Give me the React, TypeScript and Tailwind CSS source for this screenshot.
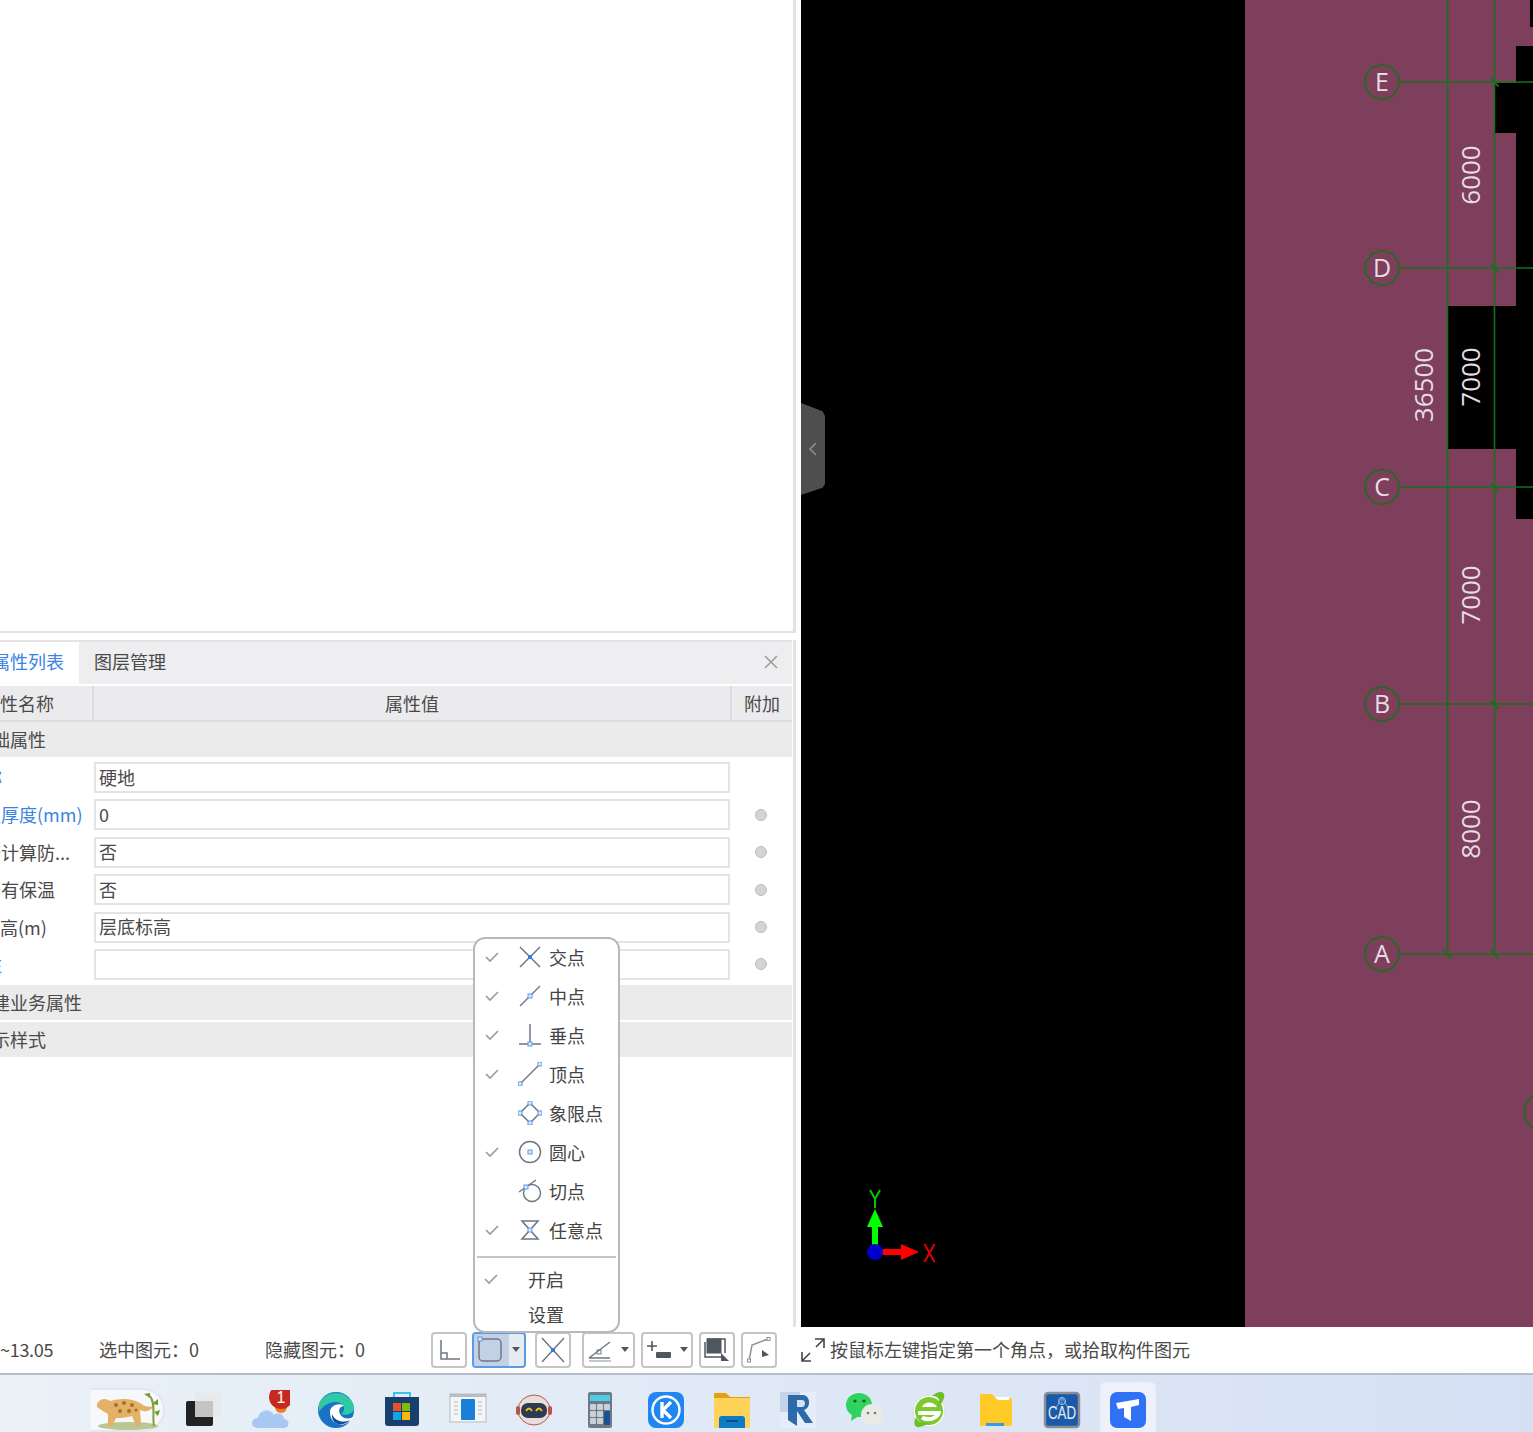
import type { ReactNode } from "react";

const rows = [
  { name: "名称", value: "硬地", blue: true, offset: "-ml-[34px]", dot: false },
  { name: "板厚度(mm)", value: "0", blue: true, offset: "-ml-[17px]", dot: true },
  { name: "是否计算防...", value: "否", blue: false, offset: "-ml-[35px]", dot: true },
  { name: "是否有保温", value: "否", blue: false, offset: "-ml-[35px]", dot: true },
  { name: "底标高(m)", value: "层底标高", blue: false, offset: "-ml-[36px]", dot: true },
  { name: "备注", value: "", blue: true, offset: "-ml-[34px]", dot: true },
];

const S = "#6f7785";
const B = "#5b9be6";

function Handle({ x, y }: { x: number; y: number }) {
  return <rect x={x - 2} y={y - 2} width="4" height="4" fill="#dbe9fb" stroke={B} strokeWidth="1" />;
}

const snapIcons: Record<string, ReactNode> = {
  交点: (
    <>
      <path d="M2 2 22 22M22 2 2 22" stroke={S} strokeWidth="1.5" />
      <rect x="10" y="10" width="4" height="4" fill="#2f7fe0" />
    </>
  ),
  中点: (
    <>
      <path d="M2 22 22 2" stroke={S} strokeWidth="1.5" />
      <Handle x={12} y={12} />
    </>
  ),
  垂点: (
    <>
      <path d="M12 1V20M1 21H23" stroke={S} strokeWidth="1.5" />
      <Handle x={12} y={21} />
    </>
  ),
  顶点: (
    <>
      <path d="M2 22 22 2" stroke={S} strokeWidth="1.5" />
      <Handle x={22} y={2} />
      <Handle x={2} y={22} />
    </>
  ),
  象限点: (
    <>
      <path d="M12 2 22 12 12 22 2 12Z" fill="none" stroke={S} strokeWidth="1.5" />
      <Handle x={12} y={2} />
      <Handle x={22} y={12} />
      <Handle x={12} y={22} />
      <Handle x={2} y={12} />
    </>
  ),
  圆心: (
    <>
      <circle cx="12" cy="12" r="10.5" fill="none" stroke={S} strokeWidth="1.5" />
      <Handle x={12} y={12} />
    </>
  ),
  切点: (
    <>
      <circle cx="14" cy="14" r="8.5" fill="none" stroke={S} strokeWidth="1.5" />
      <path d="M1 13 18 1" stroke={S} strokeWidth="1.5" />
      <Handle x={8} y={8} />
    </>
  ),
  任意点: (
    <>
      <path d="M4 3H20L4 21H20Z" fill="none" stroke={S} strokeWidth="1.6" />
      <Handle x={12} y={12} />
    </>
  ),
};

const menuItems = [
  { label: "交点", on: true },
  { label: "中点", on: true },
  { label: "垂点", on: true },
  { label: "顶点", on: true },
  { label: "象限点", on: false },
  { label: "圆心", on: true },
  { label: "切点", on: false },
  { label: "任意点", on: true },
];

function Check({ on }: { on: boolean }) {
  return (
    <svg width="16" height="12" viewBox="0 0 16 12" className={on ? "" : "invisible"}>
      <path d="M2 6 6 10 14 2" fill="none" stroke="#9a9a9a" strokeWidth="1.6" />
    </svg>
  );
}

function SnapMenu() {
  return (
    <div className="absolute left-[473px] top-[937px] z-20 flex h-[396px] w-[147px] flex-col rounded-[12px] border-2 border-[#b9b9b9] bg-white">
      <div className="-mt-[2px]">
        {menuItems.map((m) => (
          <div key={m.label} className="flex h-[39.1px] shrink-0 items-center pl-[9px]">
            <Check on={m.on} />
            <svg width="24" height="24" viewBox="0 0 24 24" className="ml-[18px]">
              {snapIcons[m.label]}
            </svg>
            <span className="ml-[7px] text-[18px] leading-none text-[#444]">{m.label}</span>
          </div>
        ))}
      </div>
      <div className="mx-[2px] mt-[6px] h-[2px] bg-[#c4c4c4]" />
      <div className="mt-[4px] flex h-[36px] items-center pl-[8px]">
        <Check on />
        <span className="ml-[29px] text-[18px] leading-none text-[#444]">开启</span>
      </div>
      <div className="mt-[1px] flex h-[34px] items-center pl-[53px]">
        <span className="text-[18px] leading-none text-[#444]">设置</span>
      </div>
    </div>
  );
}

function PropertyPanel() {
  return (
    <div className="flex h-[687px] flex-col border-r-[3px] border-[#e2e2e2] bg-white pr-[1px]">
      <div className="flex h-[44px] items-stretch border-t-2 border-[#e4e4e6] bg-[#eeeef0] text-[18px]">
        <div className="flex w-[79px] items-center overflow-hidden bg-white pb-[3px]">
          <span className="-ml-[8px] whitespace-nowrap text-[#3b82e6]">属性列表</span>
        </div>
        <div className="ml-[15px] flex items-center pb-[3px] text-[#4a4a4a]">图层管理</div>
        <svg width="14" height="14" viewBox="0 0 14 14" className="ml-auto mr-[14px] -mt-[2px] self-center">
          <path d="M1 1 13 13M13 1 1 13" stroke="#9b9b9b" strokeWidth="1.5" />
        </svg>
      </div>
      <div className="mt-[2px] flex h-[36px] items-center border-b-2 border-[#dcdcdc] bg-[#ebebed] text-[18px] text-[#4a4a4a]">
        <div className="flex h-full w-[94px] items-center overflow-hidden border-r-2 border-[#dcdcdc]">
          <span className="-ml-[18px] whitespace-nowrap">属性名称</span>
        </div>
        <div className="flex h-full w-[638px] items-center justify-center border-r-2 border-[#dcdcdc]">属性值</div>
        <div className="flex-1 text-center">附加</div>
      </div>
      <GroupRow label="基础属性" className="h-[35px]" />
      <div className="pt-[5px]">
        {rows.map((r) => (
          <div key={r.value + r.name} className="flex h-[37.4px] items-start">
            <div className="flex h-[31px] w-[94px] shrink-0 items-center overflow-hidden">
              <span className={`whitespace-nowrap text-[18px] ${r.offset} ${r.blue ? "text-[#3b82e6]" : "text-[#4a4a4a]"}`}>
                {r.name}
              </span>
            </div>
            <div className="flex h-[31px] w-[636px] items-center border-2 border-[#e4e4e4] pb-[1px] pl-[3px] text-[18px] text-[#4a4a4a]">
              {r.value}
            </div>
            <div className="flex h-[31px] flex-1 items-center justify-center pr-[1px]">
              {r.dot && <span className="h-[12px] w-[12px] rounded-full border border-[#bdbdbd] bg-[#d4d4d4]" />}
            </div>
          </div>
        ))}
      </div>
      <GroupRow label="土建业务属性" className="-mt-[1px] h-[35px]" />
      <GroupRow label="显示样式" className="mt-[2px] h-[35px]" />
    </div>
  );
}

function GroupRow({ label, className }: { label: string; className: string }) {
  return (
    <div className={`flex items-center overflow-hidden bg-[#ebebeb] text-[18px] text-[#4a4a4a] ${className}`}>
      <span className="-ml-[26px] whitespace-nowrap">{label}</span>
    </div>
  );
}

const axes = [
  { l: "E", y: 82 },
  { l: "D", y: 268 },
  { l: "C", y: 487 },
  { l: "B", y: 704 },
  { l: "A", y: 954 },
];

function octagon(cx: number, cy: number, r: number) {
  const pts = [];
  for (let i = 0; i < 10; i++) {
    const a = (Math.PI * 2 * i) / 10 + Math.PI / 10;
    pts.push(`${(cx + r * Math.cos(a)).toFixed(1)},${(cy + r * Math.sin(a)).toFixed(1)}`);
  }
  return pts.join(" ");
}

function Drawing() {
  const green = "#16701c";
  const label = "#e6dce3";
  const dims = [
    { t: "6000", x: 1471, y: 175 },
    { t: "7000", x: 1471, y: 377 },
    { t: "36500", x: 1424, y: 385 },
    { t: "7000", x: 1471, y: 595 },
    { t: "8000", x: 1471, y: 829 },
  ];
  return (
    <svg width="732" height="1327" viewBox="801 0 732 1327" className="block">
      <rect x="801" y="0" width="732" height="1327" fill="#000" />
      <rect x="1245" y="0" width="288" height="1327" fill="#7d3f5b" />
      <rect x="1530" y="0" width="3" height="27" fill="#000" />
      <rect x="1516" y="46" width="17" height="473" fill="#000" />
      <rect x="1495" y="83" width="21" height="50" fill="#000" />
      <rect x="1448" y="306" width="85" height="143" fill="#000" />
      <path d="M1447.5 0V954M1494.5 0V954" stroke={green} strokeWidth="1.6" />
      {axes.map((a) => (
        <g key={a.l}>
          <path d={`M1400 ${a.y}H1533`} stroke={green} strokeWidth="1.6" />
          <polygon points={octagon(1382, a.y, 17.5)} fill="none" stroke={green} strokeWidth="1.6" />
          <text x="1382" y={a.y + 9} textAnchor="middle" fontSize="25" fontFamily="Open Sans, sans-serif" fill={label}>
            {a.l}
          </text>
          <path d={`M1490.5 ${a.y - 3.5}l8 8`} stroke={green} strokeWidth="1.8" />
        </g>
      ))}
      <path d="M1443.5 950.5l8 8" stroke={green} strokeWidth="1.8" />
      <polygon points={octagon(1541, 1112, 17.5)} fill="none" stroke={green} strokeWidth="1.6" />
      {dims.map((d) => (
        <text
          key={d.t + d.y}
          transform={`translate(${d.x + 9} ${d.y}) rotate(-90)`}
          textAnchor="middle"
          fontSize="26"
          fontFamily="Open Sans, sans-serif"
          fill={label}
        >
          {d.t}
        </text>
      ))}
      <path d="M875 1246V1226" stroke="#00ff00" strokeWidth="6" />
      <path d="M875 1209 883 1227H867Z" fill="#00ff00" />
      <path d="M880 1252H902" stroke="#ff0000" strokeWidth="6" />
      <path d="M919 1252 901 1244V1260Z" fill="#ff0000" />
      <circle cx="875" cy="1252" r="8" fill="#0000c8" />
      <path d="M870 1190 875 1199 880 1190M875 1199V1208" fill="none" stroke="#00c800" strokeWidth="2" />
      <path d="M924.5 1244 934.5 1262M934.5 1244 924.5 1262" fill="none" stroke="#e00000" strokeWidth="2" />
    </svg>
  );
}

function ToolButton({ w, className, children, viewW }: { w: string; className: string; children: ReactNode; viewW: number }) {
  return (
    <div className={`flex h-[36px] shrink-0 items-center rounded-[4px] border-2 border-[#c4c4c4] bg-white ${w} ${className}`}>
      <svg width={viewW} height="32" viewBox={`0 0 ${viewW} 32`}>
        {children}
      </svg>
    </div>
  );
}

const Caret = ({ x }: { x: number }) => <path d={`M${x} 13h8l-4 5z`} fill="#555" />;

function StatusBar() {
  return (
    <div className="flex h-[48px] items-center border-b-2 border-[#b7bdc8] bg-white text-[18px] text-[#4a4a4a]">
      <span className="-mt-[2px] w-[99px] shrink-0 whitespace-nowrap tracking-[-0.3px]">~13.05</span>
      <span className="-mt-[2px] w-[166px] shrink-0 whitespace-nowrap">选中图元：0</span>
      <span className="-mt-[2px] w-[166px] shrink-0 whitespace-nowrap">隐藏图元：0</span>
      <ToolButton w="w-[36px]" className="" viewW={32}>
        <path d="M8 6V25H27M8 19H14V25" fill="none" stroke={S} strokeWidth="1.5" />
      </ToolButton>
      <div className="relative ml-[5px] flex h-[36px] w-[54px] shrink-0 overflow-hidden rounded-[4px] border-2 border-[#5b9be6] bg-[#e6ebf2]">
        <div className="h-full w-[35px] bg-[#c2d1e5]" />
        <svg width="50" height="32" viewBox="0 0 50 32" className="absolute left-0 top-0">
          <rect x="5" y="5" width="22" height="22" rx="4" fill="none" stroke={S} strokeWidth="1.5" />
          <Handle x={6} y={5} />
          <Caret x={38} />
        </svg>
      </div>
      <ToolButton w="w-[36px]" className="ml-[9px]" viewW={32}>
        <path d="M5 4 27 28M27 4 5 28" stroke={S} strokeWidth="1.5" />
        <rect x="14" y="14" width="4" height="4" fill="#2f7fe0" />
      </ToolButton>
      <ToolButton w="w-[53px]" className="ml-[11px]" viewW={49}>
        <path d="M5 24 26 8M5 24H26" fill="none" stroke={S} strokeWidth="1.5" />
        <path d="M5 27H27" stroke="#b0b5bd" strokeWidth="1.5" />
        <rect x="13" y="16" width="4" height="4" fill="none" stroke={S} />
        <Caret x={37} />
      </ToolButton>
      <ToolButton w="w-[52px]" className="ml-[6px]" viewW={48}>
        <path d="M4 12H14M9 7V17" stroke="#555" strokeWidth="1.6" />
        <rect x="13" y="18" width="15" height="6" rx="1" fill="#50565f" />
        <Caret x={37} />
      </ToolButton>
      <ToolButton w="w-[36px]" className="ml-[6px]" viewW={32}>
        <rect x="6" y="5" width="14" height="14" fill="#50565f" stroke="#50565f" />
        <path d="M6 5H24V19M4 8V23H20" fill="none" stroke="#50565f" strokeWidth="1.5" />
        <path d="M20 19 28 27H20Z" fill="#50565f" />
      </ToolButton>
      <ToolButton w="w-[36px]" className="ml-[6px]" viewW={32}>
        <path d="M6 27 9 11 25 5" fill="none" stroke="#8a8f98" strokeWidth="1.4" />
        <rect x="4.5" y="25" width="3" height="3" fill="#fff" stroke="#8a8f98" />
        <rect x="24" y="3.5" width="3" height="3" fill="#fff" stroke="#8a8f98" />
        <path d="M19 16 26 21 19 23Z" fill="#50565f" />
      </ToolButton>
      <svg width="26" height="26" viewBox="0 0 26 26" className="ml-[23px] shrink-0">
        <path d="M2 24 10 16M2 15V24H11M16 10 24 2M15 2H24V11" fill="none" stroke="#444" strokeWidth="1.6" />
      </svg>
      <span className="-mt-[2px] ml-[4px] whitespace-nowrap">按鼠标左键指定第一个角点，或拾取构件图元</span>
    </div>
  );
}

const taskIcons: { key: string; node: ReactNode }[] = [
  {
    key: "stack",
    node: (
      <>
        <rect x="2" y="11" width="27" height="25" rx="2" fill="#222" />
        <rect x="11" y="3" width="26" height="24" rx="2" fill="#e8e8ea" fillOpacity="0.85" />
        <rect x="11" y="11" width="18" height="16" fill="#c4c4c4" />
      </>
    ),
  },
  {
    key: "cloud",
    node: (
      <>
        <circle cx="31" cy="17" r="6" fill="#f07a1e" />
        <path d="M8 38C0 38 0 28 8 28 9 19 21 18 24 25 27 22 34 24 34 29 40 29 40 38 34 38Z" fill="#a8c8f2" />
        <circle cx="31" cy="7" r="12" fill="#c42b1e" />
        <text x="31" y="13" textAnchor="middle" fontSize="16" fontFamily="Liberation Sans, sans-serif" fill="#fff">
          1
        </text>
      </>
    ),
  },
  {
    key: "edge",
    node: (
      <>
        <circle cx="20" cy="20" r="18" fill="#1a72c4" />
        <path d="M3 14C8 0 32 -2 38 16 39 24 30 26 25 24 32 18 26 11 18 12 11 13 6 17 3 22Z" fill="#2ec9a6" />
        <path d="M14 22C14 15 24 12 28 16 24 16 22 20 24 24 27 30 36 29 38 26 33 38 14 38 14 22Z" fill="#fff" />
        <path d="M16 24C18 30 26 34 34 30 28 37 15 36 16 24Z" fill="#0f4f9a" />
      </>
    ),
  },
  {
    key: "store",
    node: (
      <>
        <path d="M12 7V3H28V7" fill="none" stroke="#3fc1f0" strokeWidth="2" />
        <path d="M3 7H37V33a3 3 0 0 1-3 3H6a3 3 0 0 1-3-3Z" fill="#17406f" />
        <rect x="11" y="13" width="8" height="8" fill="#e8502a" />
        <rect x="20" y="13" width="8" height="8" fill="#7fb90a" />
        <rect x="11" y="22" width="8" height="8" fill="#0ea5e9" />
        <rect x="20" y="22" width="8" height="8" fill="#fdb70b" />
      </>
    ),
  },
  {
    key: "panel",
    node: (
      <>
        <rect x="2" y="4" width="36" height="28" fill="#f4f5f7" stroke="#b8bcc2" />
        <rect x="2" y="4" width="36" height="3" fill="#b8bcc2" />
        <rect x="13" y="9" width="14" height="21" rx="1" fill="#1a7fd6" />
        <path d="M6 12H10M6 16H10M6 20H10M6 24H10M30 12H34M30 16H34M30 20H34M30 24H34" stroke="#c5c9cf" strokeWidth="1.5" />
      </>
    ),
  },
  {
    key: "robot",
    node: (
      <>
        <ellipse cx="20" cy="20" rx="16" ry="15" fill="#e9dedb" stroke="#b5564a" />
        <rect x="7" y="13" width="26" height="15" rx="7" fill="#2d3a52" />
        <path d="M12 21q3-5 6 0M22 21q3-5 6 0" fill="none" stroke="#f3c11c" strokeWidth="1.8" />
        <rect x="2" y="16" width="4" height="9" rx="2" fill="#b5564a" />
        <rect x="34" y="16" width="4" height="9" rx="2" fill="#b5564a" />
      </>
    ),
  },
  {
    key: "calc",
    node: (
      <>
        <rect x="8" y="2" width="24" height="36" rx="2" fill="#6e7b87" />
        <rect x="10" y="5" width="20" height="6" fill="#4fcce8" />
        {[14, 21, 28].map((y) =>
          [10, 17].map((x) => <rect key={`${x}-${y}`} x={x} y={y} width="6" height="6" rx="1" fill="#c9d0d6" />),
        )}
        <rect x="24" y="14" width="6" height="6" rx="1" fill="#c9d0d6" />
        <rect x="24" y="21" width="6" height="14" rx="1" fill="#1c4f94" />
      </>
    ),
  },
  {
    key: "kugou",
    node: (
      <>
        <rect x="2" y="2" width="36" height="36" rx="8" fill="#1f86f2" />
        <circle cx="20" cy="20" r="13.5" fill="none" stroke="#fff" strokeWidth="2.4" />
        <path d="M16 12V28M25 12 17 20 25 28" fill="none" stroke="#fff" strokeWidth="3.4" />
      </>
    ),
  },
  {
    key: "folder1",
    node: (
      <>
        <path d="M2 3H14L18 7H38V38H2Z" fill="#e3a20d" />
        <rect x="2" y="8" width="36" height="30" fill="#ffd35a" />
        <path d="M7 38V29a3 3 0 0 1 3-3H30a3 3 0 0 1 3 3V38Z" fill="#0f7bc4" />
        <path d="M14 31H26" stroke="#0a4c85" strokeWidth="2" />
      </>
    ),
  },
  {
    key: "revit",
    node: (
      <>
        <rect x="2" y="2" width="36" height="36" fill="#e6edf8" />
        <path d="M2 2H22V22H2Z" fill="#c3d3ea" />
        <path d="M10 5H25C33 6 33 18 26 20L35 33H27L19 21V36L10 30Z" fill="#2c6aa8" />
        <path d="M19 10H24C28 10 28 17 24 17H19Z" fill="#d6e1f1" />
      </>
    ),
  },
  {
    key: "wechat",
    node: (
      <>
        <ellipse cx="15" cy="15" rx="13" ry="12" fill="#2fd45f" />
        <path d="M8 24 7 31 15 26Z" fill="#2fd45f" />
        <circle cx="11" cy="11" r="1.6" fill="#165c2a" />
        <circle cx="20" cy="11" r="1.6" fill="#165c2a" />
        <circle cx="28" cy="25" r="11" fill="#e9e9e6" />
        <circle cx="24" cy="23" r="1.3" fill="#777" />
        <circle cx="31" cy="23" r="1.3" fill="#777" />
      </>
    ),
  },
  {
    key: "ie",
    node: (
      <>
        <circle cx="19" cy="21" r="16" fill="#fff" stroke="#d8dde3" />
        <circle cx="19" cy="21" r="14" fill="#7dc930" />
        <path d="M12 17C14 11 24 11 27 17ZM8 21H31C31 30 18 34 11 29L13 26C18 28 23 27 25 25H8Z" fill="#fff" />
        <path d="M22 6C29 0 36 1 34 8 32 14 28 18 27 19 30 12 31 6 22 6ZM6 27C3 33 4 38 10 37 14 36 18 34 21 32 14 34 8 33 6 27Z" fill="#6cbf2a" />
      </>
    ),
  },
  {
    key: "folder2",
    node: (
      <>
        <path d="M4 4H16L20 8H34a2 2 0 0 1 2 2V34a2 2 0 0 1-2 2H4Z" fill="#ffc928" />
        <path d="M19 7H33V10H22Z" fill="#fff" />
        <rect x="10" y="33" width="18" height="3" fill="#3b9ae8" />
      </>
    ),
  },
  {
    key: "cad",
    node: (
      <>
        <rect x="3" y="3" width="34" height="34" rx="3" fill="#1a5aa8" stroke="#8a8f94" strokeWidth="2.4" />
        <path d="M20 7 14 18M20 7 26 18M20 7V15" fill="none" stroke="#7aa4d6" strokeWidth="1" />
        <circle cx="20" cy="11" r="3.5" fill="none" stroke="#9fc0e6" strokeWidth="1" />
        <text x="20" y="29" textAnchor="middle" fontSize="18" textLength="28" lengthAdjust="spacingAndGlyphs" fontFamily="Liberation Sans, sans-serif" fill="#e8eef6">
          CAD
        </text>
      </>
    ),
  },
];

function Leopard() {
  return (
    <div className="flex h-[44px] w-[74px] shrink-0 items-center justify-center rounded-r-[22px] border-2 border-l-0 border-[#dfe7f1] bg-[#f6f8fb]">
      <svg width="70" height="40" viewBox="0 0 70 40">
        <ellipse cx="36" cy="36" rx="30" ry="4" fill="#b9c892" />
        <path d="M5 14C8 8 14 8 18 11 28 8 40 8 48 13 52 16 56 18 62 16 58 22 52 22 48 20 48 26 50 32 48 36H44L40 26C32 28 28 28 24 28L20 36H16L16 24C12 22 8 19 5 17Z" fill="#e3b266" />
        <g fill="#a8702c">
          <circle cx="24" cy="15" r="2" />
          <circle cx="32" cy="13" r="2" />
          <circle cx="40" cy="15" r="2" />
          <circle cx="28" cy="21" r="2" />
          <circle cx="37" cy="21" r="2" />
          <circle cx="44" cy="20" r="1.6" />
        </g>
        <path d="M62 36C60 26 64 14 58 6" fill="none" stroke="#7ea33a" strokeWidth="2" />
        <path d="M58 8 52 4 58 3ZM60 14 66 9 66 15ZM62 22 68 20 66 26Z" fill="#6f9a2e" />
      </svg>
    </div>
  );
}

function Taskbar() {
  return (
    <div className="flex h-[57px] items-center bg-gradient-to-r from-[#eaf1f7] to-[#d5e0f4] pl-[91px] pt-[13px]">
      <Leopard />
      <div className="ml-[19px] flex items-center gap-[26px]">
        {taskIcons.map((t) => (
          <svg key={t.key} width="40" height="40" viewBox="0 0 40 40" className="shrink-0">
            {t.node}
          </svg>
        ))}
        <div className="-ml-[8px] flex h-[56px] w-[56px] items-center justify-center rounded-t-[6px] bg-[#eef1fa]">
          <svg width="36" height="36" viewBox="0 0 36 36">
            <rect x="0" y="0" width="36" height="36" rx="7" fill="#2f72f6" />
            <path d="M6 11 29 7V13L21 15V29L14 25V16L8 17Z" fill="#fff" />
          </svg>
        </div>
      </div>
    </div>
  );
}

export default function App() {
  return (
    <div className="relative flex h-[1432px] w-[1533px] flex-col overflow-hidden bg-white font-['Noto_Sans_CJK_SC','Noto_Sans',sans-serif]">
      <div className="flex h-[1327px] shrink-0">
        <aside className="flex w-[801px] shrink-0 flex-col pr-[5px]">
          <div className="h-[633px] border-b-2 border-r-[3px] border-[#e2e2e2] bg-white" />
          <div className="h-[7px]" />
          <PropertyPanel />
        </aside>
        <main className="relative flex-1 overflow-hidden bg-black">
          <Drawing />
          <div className="absolute left-0 top-[403px] flex h-[92px] w-[24px] items-center justify-center bg-[#4e4e4e] [clip-path:polygon(0_0,90%_9%,100%_14%,100%_88%,90%_92%,0_100%)]">
            <svg width="10" height="14" viewBox="0 0 10 14">
              <path d="M8 1 2 7 8 13" fill="none" stroke="#8c8c8c" strokeWidth="1.6" />
            </svg>
          </div>
        </main>
      </div>
      <StatusBar />
      <Taskbar />
      <SnapMenu />
    </div>
  );
}
